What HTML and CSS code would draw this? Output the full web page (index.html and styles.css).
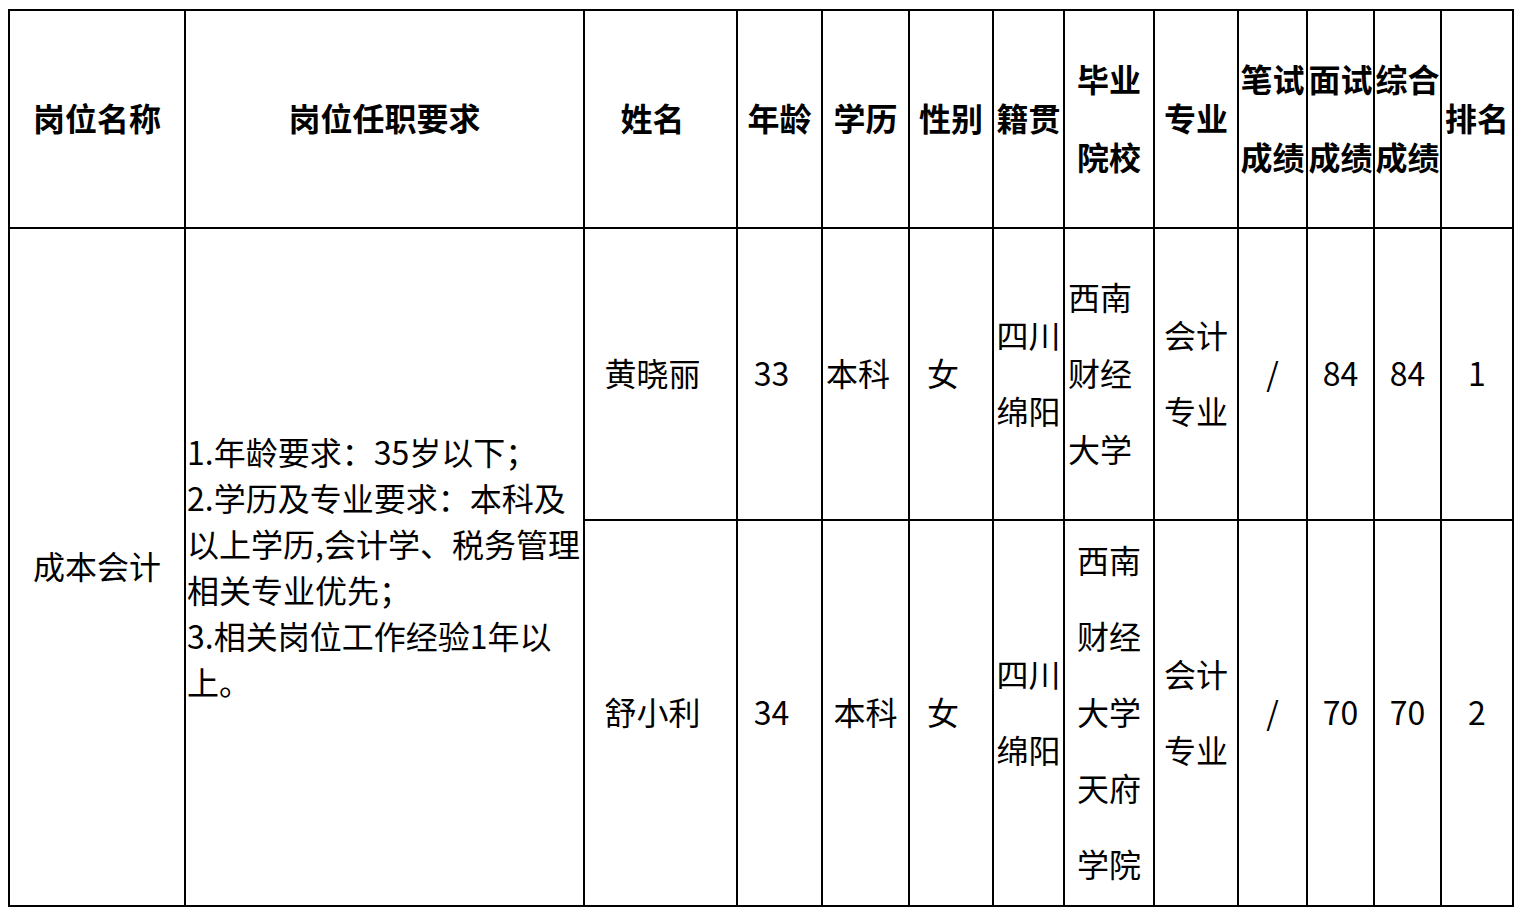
FILE: index.html
```html
<!DOCTYPE html>
<html lang="zh-CN">
<head>
<meta charset="utf-8">
<title>岗位</title>
<link rel="stylesheet" href="styles.css">
</head>
<body>
<table class="sheet">
  <colgroup>
    <col class="w176"><col class="w399"><col class="w153"><col class="w85"><col class="w87"><col class="w84"><col class="w71"><col class="w90"><col class="w84"><col class="w69"><col class="w67"><col class="w67"><col class="w72">
  </colgroup>
  <tr class="head">
    <th>岗位名称</th>
    <th>岗位任职要求</th>
    <th class="pr">姓名</th>
    <th>年龄</th>
    <th>学历</th>
    <th>性别</th>
    <th>籍贯</th>
    <th class="stack-h">毕业<br>院校</th>
    <th>专业</th>
    <th class="stack-h">笔试<br>成绩</th>
    <th class="stack-h">面试<br>成绩</th>
    <th class="stack-h">综合<br>成绩</th>
    <th>排名</th>
  </tr>
  <tr class="r1">
    <td rowspan="2">成本会计</td>
    <td rowspan="2" class="req">1.年龄要求：35岁以下；<br>2.学历及专业要求：本科及<br>以上学历,会计学、税务管理<br>相关专业优先；<br>3.相关岗位工作经验1年以<br>上。</td>
    <td class="pr">黄晓丽</td>
    <td class="pr">33</td>
    <td class="left">本科</td>
    <td class="pr">女</td>
    <td class="stack">四川<br>绵阳</td>
    <td class="stack left">西南<br>财经<br>大学</td>
    <td class="stack">会计<br>专业</td>
    <td>/</td>
    <td>84</td>
    <td>84</td>
    <td>1</td>
  </tr>
  <tr class="r2">
    <td class="pr">舒小利</td>
    <td class="pr">34</td>
    <td>本科</td>
    <td class="pr">女</td>
    <td class="stack">四川<br>绵阳</td>
    <td class="stack">西南<br>财经<br>大学<br>天府<br>学院</td>
    <td class="stack">会计<br>专业</td>
    <td>/</td>
    <td>70</td>
    <td>70</td>
    <td>2</td>
  </tr>
</table>
</body>
</html>
```

FILE: styles.css
```css
html, body {
  margin: 0;
  padding: 0;
  background: #fff;
}
body {
  padding: 9px 0 0 8px;
  font-family: "Noto Sans CJK SC", "Noto Sans", sans-serif;
  color: #000;
}
.sheet {
  border-collapse: collapse;
  table-layout: fixed;
  width: 1506px;
}
.w176 { width: 176px; }
.w399 { width: 399px; }
.w153 { width: 153px; }
.w85 { width: 85px; }
.w87 { width: 87px; }
.w84 { width: 84px; }
.w71 { width: 71px; }
.w90 { width: 90px; }
.w69 { width: 69px; }
.w67 { width: 67px; }
.w72 { width: 72px; }
.sheet th,
.sheet td {
  border: 2px solid #000;
  padding: 0 0 4px 0;
  font-size: 32px;
  line-height: 46px;
  text-align: center;
  vertical-align: middle;
  white-space: nowrap;
  overflow: visible;
}
.sheet th {
  font-weight: 700;
}
.head { height: 218px; }
.r1 { height: 292px; }
.r2 { height: 386px; }
.sheet .stack-h { line-height: 78px; }
.sheet .stack { line-height: 76px; }
.sheet .pr { padding-right: 16px; }
.sheet .left {
  text-align: left;
  padding-left: 3px;
}
.sheet .req {
  text-align: left;
  line-height: 46px;
  padding-left: 1px;
  padding-bottom: 2px;
}
```
